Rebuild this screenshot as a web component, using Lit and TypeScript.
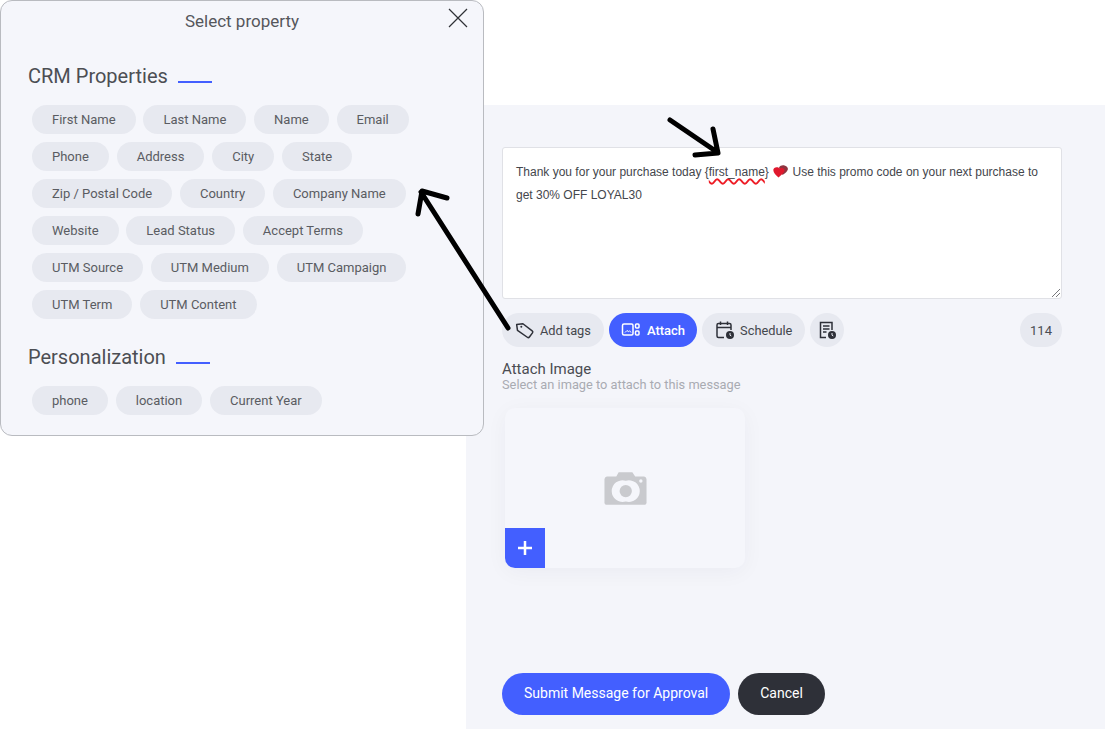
import { LitElement, html, css } from 'lit';
import { customElement } from 'lit/decorators.js';

const crmRows = [
  'First Name', 'Last Name', 'Name', 'Email', 'Phone', 'Address', 'City', 'State',
  'Zip / Postal Code', 'Country', 'Company Name', 'Website', 'Lead Status', 'Accept Terms',
  'UTM Source', 'UTM Medium', 'UTM Campaign', 'UTM Term', 'UTM Content',
];
const personalRows = ['phone', 'location', 'Current Year'];

@customElement('app-root')
export class AppRoot extends LitElement {
  static styles = css`
    :host {
      display: block;
      position: relative;
      width: 1105px;
      height: 729px;
      overflow: hidden;
      background: #fff;
      font-family: Roboto, 'Liberation Sans', sans-serif;
    }
    .panel {
      box-sizing: border-box;
      height: 624px;
      margin: 105px 0 0 466px;
      padding: 42px 43px 14px 36px;
      background: #f4f5fa;
      display: flex;
      flex-direction: column;
    }
    .message {
      box-sizing: border-box;
      position: relative;
      height: 152px;
      padding: 12px 13px;
      background: #fff;
      border: 1px solid #e0e1e6;
      border-radius: 3px;
      font: 12px/24px 'Liberation Sans', Arial, sans-serif;
      color: #44464c;
    }
    .line { white-space: nowrap; }
    .line + .line { margin-top: -1px; }
    .misspelt {
      text-decoration: underline wavy #ee1c25 1.5px;
      text-underline-offset: 2px;
    }
    .heart {
      width: 15px;
      height: 13px;
      vertical-align: -2px;
      margin: 0 1px;
    }
    .grip {
      position: absolute;
      right: 1px;
      bottom: 1px;
      width: 8px;
      height: 8px;
    }
    .toolbar {
      display: flex;
      gap: 5px;
      margin-top: 14px;
      height: 34px;
    }
    .tool {
      display: flex;
      align-items: center;
      gap: 5px;
      height: 34px;
      box-sizing: border-box;
      padding: 0 13px;
      border-radius: 17px;
      background: #e7e9f0;
      color: #44474d;
      font-size: 12.8px;
    }
    .tool svg { width: 20px; height: 20px; flex: none; }
    .tool.active {
      background: #435fff;
      color: #fff;
      font-size: 13px;
      font-weight: 500;
      gap: 6px;
      padding: 0 12px;
    }
    .tool.round { width: 34px; padding: 0 7px; }
    .count {
      margin-left: auto;
      width: 42px;
      height: 34px;
      border-radius: 17px;
      background: #e7e9f0;
      color: #4a4d53;
      font-size: 13px;
      display: flex;
      align-items: center;
      justify-content: center;
    }
    .attach-title {
      margin-top: 14px;
      font-size: 15px;
      line-height: 17px;
      color: #4a4c52;
    }
    .attach-sub {
      font-size: 12.8px;
      line-height: 14px;
      color: #a9abb2;
    }
    .dropzone {
      position: relative;
      width: 240px;
      height: 160px;
      margin: 16px 0 0 3px;
      border-radius: 10px;
      background: #f5f6fb;
      box-shadow: 0 4px 22px rgba(30, 34, 60, 0.045);
      display: flex;
      align-items: center;
      justify-content: center;
    }
    .camera { width: 43px; height: 35px; }
    .plus {
      position: absolute;
      left: 0;
      bottom: 0;
      width: 40px;
      height: 40px;
      border-bottom-left-radius: 10px;
      background: #435fff;
      display: flex;
      align-items: center;
      justify-content: center;
    }
    .plus svg { width: 16px; height: 16px; }
    .actions {
      display: flex;
      gap: 8px;
      margin-top: auto;
    }
    .btn {
      box-sizing: border-box;
      height: 42px;
      border-radius: 21px;
      color: #fff;
      font-size: 14px;
      font-weight: 400;
      display: flex;
      align-items: center;
      justify-content: center;
      padding: 0 22px 2px;
    }
    .btn.primary { background: #435fff; }
    .btn.dark { background: #2e3038; }

    .popup {
      position: absolute;
      left: 0;
      top: 0;
      box-sizing: border-box;
      width: 484px;
      height: 436px;
      background: #f5f6fb;
      border: 1px solid #b9bbc0;
      border-radius: 12px;
      padding: 0 27px;
    }
    .popup-title {
      margin: 11px 0 0;
      text-align: center;
      font-size: 17px;
      line-height: 19px;
      font-weight: 400;
      color: #55575c;
    }
    .close {
      position: absolute;
      top: 7px;
      right: 15px;
      width: 20px;
      height: 20px;
    }
    .section {
      display: flex;
      align-items: flex-end;
      gap: 10px;
      font-size: 20px;
      line-height: 24px;
      color: #4c4e53;
    }
    .section i {
      display: block;
      width: 34px;
      height: 2px;
      margin-bottom: 5px;
      background: #435fff;
    }
    .crm { margin-top: 33px; }
    .personal { margin-top: 26px; }
    .chips {
      display: flex;
      flex-wrap: wrap;
      gap: 8px 7.8px;
      margin: 17px 0 0 4px;
      width: 385px;
    }
    .chip {
      height: 29px;
      box-sizing: border-box;
      padding: 0 20px;
      border-radius: 15px;
      background: #e7e9f0;
      color: #5a5c62;
      font-size: 13px;
      line-height: 29px;
      white-space: nowrap;
    }
    .arrows {
      position: absolute;
      left: 0;
      top: 0;
      width: 1105px;
      height: 729px;
      pointer-events: none;
    }
  `;

  render() {
    return html`
      <div class="panel">
        <div class="message">
          <div class="line">
            Thank you for your purchase today {<span class="misspelt">first_name</span>}
            <svg class="heart" viewBox="0 0 15 13">
              <path fill="#8f3440" d="M6 2.500C7 .5 9.500 0 11.500.5 13.500 1 15.300 2.500 14.800 4.500 14.300 6.500 12 8.500 9.500 10z"/>
              <path fill="#e0182d" d="M.3 5C.3 2.700 2.800 1.700 4.800 2.300L7 3.500C8.500 2.700 11 3 11.500 4.800 12 7 8.500 10 5.500 12.500 3 10.500.3 7.500.3 5z"/>
            </svg>
            Use this promo code on your next purchase to
          </div>
          <div class="line">get 30% OFF LOYAL30</div>
          <svg class="grip" viewBox="0 0 8 8">
            <path d="M0 8L8 0M4 8L8 4" stroke="#77787c" stroke-width="1" fill="none"/>
          </svg>
        </div>

        <div class="toolbar">
          <div class="tool">
            <svg viewBox="0 0 20 20" fill="none" stroke="#2e3038" stroke-width="1.500" stroke-linejoin="round">
              <path d="M2.500 3.500h6.300l8.200 8.300a1.500 1.500 0 0 1 0 2.100l-3.600 3.600a1.500 1.500 0 0 1-2.100 0L2.500 9.300z" transform="rotate(-8 10 10)"/>
              <circle cx="6.300" cy="6.800" r="1" fill="#2e3038" stroke="none"/>
            </svg>
            Add tags
          </div>
          <div class="tool active">
            <svg viewBox="0 0 20 20" fill="none" stroke="#fff" stroke-width="1.500">
              <rect x="1.500" y="4" width="10.500" height="11" rx="1.500"/>
              <path d="M4 12.500l2-2 1.500 1.200 1-1 1.500 1.800" stroke-width="1"/>
              <rect x="14.500" y="4" width="3.500" height="4" rx="1"/>
              <rect x="14.500" y="11" width="3.500" height="4" rx="1"/>
            </svg>
            Attach
          </div>
          <div class="tool">
            <svg viewBox="0 0 20 20" fill="none" stroke="#2e3038" stroke-width="1.500">
              <path d="M9 17.500H3.500a1.500 1.500 0 0 1-1.500-1.500V5a1.500 1.500 0 0 1 1.500-1.500h11A1.500 1.500 0 0 1 16 5v5"/>
              <path d="M2 7.500h14M5.500 1.500v3.500M12.500 1.500v3.500"/>
              <circle cx="15" cy="15" r="4" fill="#2e3038" stroke="none"/>
              <path d="M15 13v2.200l1.300.8" stroke="#e7e9f0" stroke-width="1"/>
            </svg>
            Schedule
          </div>
          <div class="tool round">
            <svg viewBox="0 0 20 20" fill="none" stroke="#2e3038" stroke-width="1.500">
              <path d="M9 17.500H3.500V2.500h11.500V10"/>
              <path d="M6 6h6.500M6 9h6.500M6 12h3.500"/>
              <circle cx="15" cy="15" r="4" fill="#2e3038" stroke="none"/>
              <path d="M15 13v2.200l1.300.8" stroke="#e7e9f0" stroke-width="1"/>
            </svg>
          </div>
          <div class="count">114</div>
        </div>

        <div class="attach-title">Attach Image</div>
        <div class="attach-sub">Select an image to attach to this message</div>

        <div class="dropzone">
          <svg class="camera" viewBox="0 0 45.500 35.500">
            <path fill="#c9cace" fill-rule="evenodd" d="M13 5L15.500 0.500H30L33 5H42.500A3 3 0 0 1 45 8V32A2.500 2.500 0 0 1 42.500 35H3A2.500 2.500 0 0 1 .5 32V8A3 3 0 0 1 3 5ZM23 9.500A11.500 11.500 0 1 0 23 31.500A11.500 11.500 0 1 0 23 9.500ZM39 8A1.800 1.800 0 1 0 39 11.600A1.800 1.800 0 1 0 39 8Z"/>
            <circle cx="23" cy="20.500" r="6.500" fill="#c9cace"/>
          </svg>
          <div class="plus">
            <svg viewBox="0 0 16 16"><path d="M8 1v14M1 8h14" stroke="#fff" stroke-width="2.500"/></svg>
          </div>
        </div>

        <div class="actions">
          <div class="btn primary">Submit Message for Approval</div>
          <div class="btn dark">Cancel</div>
        </div>
      </div>

      <div class="popup">
        <h3 class="popup-title">Select property</h3>
        <svg class="close" viewBox="0 0 20 20"><path d="M1 1l18 18M19 1L1 19" stroke="#2f3136" stroke-width="1.200"/></svg>
        <div class="section crm">CRM Properties <i></i></div>
        <div class="chips">${crmRows.map((c) => html`<span class="chip">${c}</span>`)}</div>
        <div class="section personal">Personalization <i></i></div>
        <div class="chips">${personalRows.map((c) => html`<span class="chip">${c}</span>`)}</div>
      </div>

      <svg class="arrows" viewBox="0 0 1105 729" fill="none" stroke="#000" stroke-width="5" stroke-linecap="round" stroke-linejoin="round">
        <path d="M670 120L717 152M713 129L718 153L695 155"/>
        <path d="M508 328L421 192M447 198L422 191L418 214"/>
      </svg>
    `;
  }
}
